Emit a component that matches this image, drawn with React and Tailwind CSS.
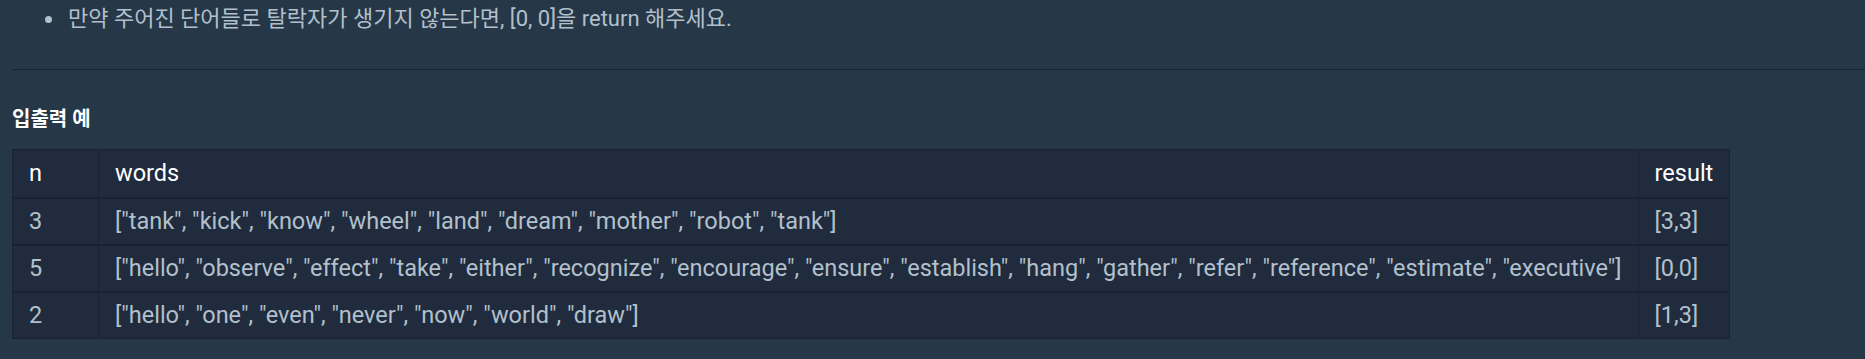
import React from 'react';

const rows = [
  { n: 3, words: '["tank", "kick", "know", "wheel", "land", "dream", "mother", "robot", "tank"]', result: '[3,3]' },
  { n: 5, words: '["hello", "observe", "effect", "take", "either", "recognize", "encourage", "ensure", "establish", "hang", "gather", "refer", "reference", "estimate", "executive"]', result: '[0,0]' },
  { n: 2, words: '["hello", "one", "even", "never", "now", "world", "draw"]', result: '[1,3]' },
];

const App = () => {
  return (
    <div
      className="min-h-screen bg-[#263747] px-3 pt-[5px] text-[#b2c0cc]"
      style={{ fontFamily: 'Roboto, "Noto Sans CJK KR", sans-serif' }}
    >
      {/* Description tail */}
      <div className="flex items-center text-[22px] leading-[28px]">
        <span className="ml-[33px] mr-[16px] h-[7px] w-[7px] rounded-full bg-[#b2c0cc]" />
        <span>만약 주어진 단어들로 탈락자가 생기지 않는다면, [0, 0]을 return 해주세요.</span>
      </div>

      <hr className="-mr-3 mt-[36px] border-0 border-t border-[#172334]" />

      <h5 className="mt-[35px] text-[20px] font-bold leading-[28px] text-white">입출력 예</h5>

      {/* Examples table */}
      <table className="mt-[16px] border-collapse bg-[#202b3d] text-[23.5px] leading-[27px]">
        <thead>
          <tr className="text-white">
            <th className="w-[86px] border border-[#172334] px-4 py-[10px] text-left font-normal">n</th>
            <th className="border border-[#172334] px-4 py-[10px] text-left font-normal">words</th>
            <th className="border border-[#172334] px-4 py-[10px] text-left font-normal">result</th>
          </tr>
        </thead>
        <tbody>
          {rows.map((row) => (
            <tr key={row.n} className="border-t-2 border-[#172334]">
              <td className="border border-[#172334] px-4 py-[9px]">{row.n}</td>
              <td className="whitespace-nowrap border border-[#172334] px-4 py-[9px]">{row.words}</td>
              <td className="border border-[#172334] px-4 py-[9px]">{row.result}</td>
            </tr>
          ))}
        </tbody>
      </table>
    </div>
  );
};

export default App;
